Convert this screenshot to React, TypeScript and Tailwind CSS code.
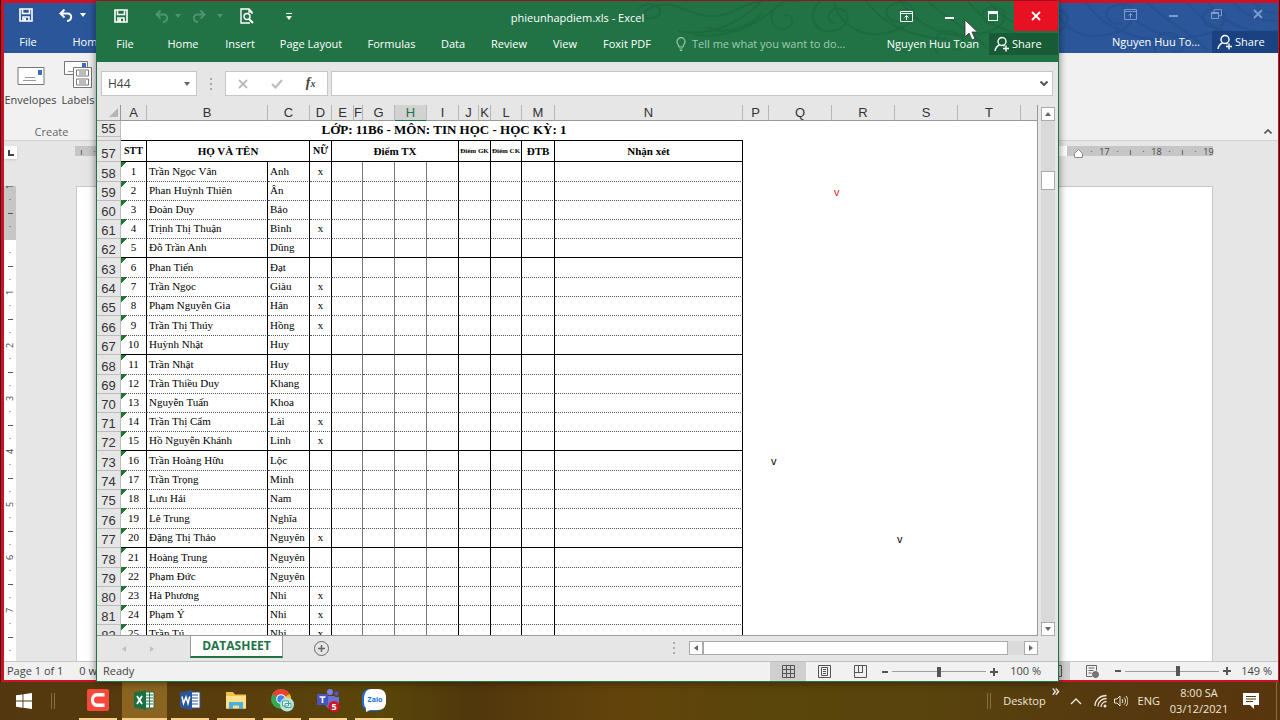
import clsx from "clsx";
import type { ReactNode } from "react";

// [first part of the name, given name, female mark]
const students: [string, string, boolean][] = [
    ["Trần Ngọc Vân", "Anh", true],
    ["Phan Huỳnh Thiên", "Ân", false],
    ["Đoàn Duy", "Bảo", false],
    ["Trịnh Thị Thuận", "Bình", true],
    ["Đỗ Trần Anh", "Dũng", false],
    ["Phan Tiến", "Đạt", false],
    ["Trần Ngọc", "Giàu", true],
    ["Phạm Nguyễn Gia", "Hân", true],
    ["Trần Thị Thúy", "Hồng", true],
    ["Huỳnh Nhật", "Huy", false],
    ["Trần Nhật", "Huy", false],
    ["Trần Thiều Duy", "Khang", false],
    ["Nguyễn Tuấn", "Khoa", false],
    ["Trần Thị Cẩm", "Lài", true],
    ["Hồ Nguyễn Khánh", "Linh", true],
    ["Trần Hoàng Hữu", "Lộc", false],
    ["Trần Trọng", "Minh", false],
    ["Lưu Hải", "Nam", false],
    ["Lê Trung", "Nghĩa", false],
    ["Đặng Thị Thảo", "Nguyên", true],
    ["Hoàng Trung", "Nguyên", false],
    ["Phạm Đức", "Nguyên", false],
    ["Hà Phương", "Nhi", true],
    ["Phạm Ý", "Nhi", true],
    ["Trần Tú", "Nhi", true],
];

const columns = [
    { name: "A", width: "w-[26px]" },
    { name: "B", width: "w-[121px]" },
    { name: "C", width: "w-[42px]" },
    { name: "D", width: "w-[22px]" },
    { name: "E", width: "w-[22px]" },
    { name: "F", width: "w-[9px]" },
    { name: "G", width: "w-[32px]" },
    { name: "H", width: "w-[32px]" },
    { name: "I", width: "w-[32px]" },
    { name: "J", width: "w-[20px]" },
    { name: "K", width: "w-[12px]" },
    { name: "L", width: "w-[31px]" },
    { name: "M", width: "w-[33px]" },
    { name: "N", width: "w-[188px]" },
    { name: "P", width: "w-[26px]" },
    { name: "Q", width: "w-[63px]" },
    { name: "R", width: "w-[63px]" },
    { name: "S", width: "w-[63px]" },
    { name: "T", width: "w-[63px]" },
];

const tabs = [
    { label: "File", width: "w-14" },
    { label: "Home", width: "w-[60px]" },
    { label: "Insert", width: "w-[54px]" },
    { label: "Page Layout", width: "w-[88px]" },
    { label: "Formulas", width: "w-[73px]" },
    { label: "Data", width: "w-[50px]" },
    { label: "Review", width: "w-[62px]" },
    { label: "View", width: "w-[50px]" },
    { label: "Foxit PDF", width: "w-[74px]" },
];

function Caret({ className }: { className?: string }) {
    return (
        <svg viewBox="0 0 6 4" className={clsx("h-[4px] w-[6px] shrink-0", className)} fill="currentColor">
            <path d="M0 0h6L3 4z" />
        </svg>
    );
}

function SaveIcon() {
    return (
        <svg viewBox="0 0 14 14" className="size-[14px]" fill="none" stroke="currentColor" strokeWidth="1.6">
            <path d="M1 1h12v12H1z" />
            <path d="M3.500 1v4.500h7V1M4 13V9h6v4" />
            <path d="M5 10h2v3H5z" fill="currentColor" stroke="none" />
        </svg>
    );
}

function UndoIcon({ flip }: { flip?: boolean }) {
    return (
        <svg viewBox="0 0 14 13" className={clsx("h-[13px] w-[14px]", flip && "-scale-x-100")} fill="none" stroke="currentColor" strokeWidth="2">
            <path d="M5.500 0.500 1.500 4.500l4 4M2 4.500h6.500c5 0 5 7-0.500 7.500" />
        </svg>
    );
}

function RibbonOptionsIcon() {
    return (
        <svg viewBox="0 0 13 11" className="h-[11px] w-[13px]" fill="none" stroke="currentColor">
            <path d="M.5.5h12v10H.5zM.5 2.500h12M6.500 9V4.500M4.500 6.500l2-2 2 2" />
        </svg>
    );
}

function CloseIcon() {
    return (
        <svg viewBox="0 0 10 10" className="size-[10px]" fill="none" stroke="currentColor" strokeWidth="1.8">
            <path d="m1 1 8 8M9 1 1 9" />
        </svg>
    );
}

function PersonPlusIcon() {
    return (
        <svg viewBox="0 0 16 16" className="size-4 shrink-0" fill="none" stroke="currentColor" strokeWidth="1.4">
            <circle cx="8" cy="5.500" r="4" />
            <path d="M1 15c.5-3 2-5 4.500-6M9 9.200l1.500 1M12 9.500v6M9 12.500h6" />
        </svg>
    );
}

// Calligraphic flourish behind the title bars
function Swirls({ className }: { className: string }) {
    return (
        <svg viewBox="0 0 420 54" preserveAspectRatio="xMaxYMin slice" className={clsx("pointer-events-none absolute", className)} fill="none" stroke="currentColor" strokeWidth="2">
            <path d="M0 8c14-12 30 2 18 8S-2 8 22 4s40 24 78 4c20-10 36-10 60-8" />
            <path d="M40 30c30 6 60-6 84-30M56 34c34 4 62-8 90-34M70 26c16 10 44-2 54-14" />
            <path d="M140 4c-12 10-6 26 6 24s10-16 0-14M182 0c-14 14-6 32 12 30s20-20 8-22-16 12-6 14" />
            <path d="M196 0c4 24 30 40 60 30s20-34 2-28-8 22 6 18M228 0c14 20 40 36 80 38" />
            <path d="M262 0c16 22 46 44 90 30 18-6 20-24 4-24s-14 18 0 18M290 0c14 16 40 26 60 48" />
            <path d="M330 0c14 20 34 34 90 40M350 0c20 24 40 30 70 28M376 0c10 12 24 18 44 18M396 0c4 6 12 10 24 10" />
            <path d="M300 54c-10-16 4-30 18-22s6 20-4 16M400 54c-4-14 6-20 20-20" />
        </svg>
    );
}

function RulerMark({ children, vertical }: { children?: ReactNode; vertical?: boolean }) {
    return (
        <span className={clsx("flex shrink-0 items-center justify-center text-[9px] leading-none text-[#444]", vertical ? "w-full flex-1" : "w-[13px]")}>
            {children}
        </span>
    );
}

function ZoomSlider({ value }: { value: number }) {
    return (
        <input
            type="range"
            aria-label="Zoom"
            defaultValue={value}
            className="h-3 w-[94px] appearance-none bg-transparent bg-[linear-gradient(#a0a0a0,#a0a0a0)] bg-[length:100%_1px] bg-center bg-no-repeat [&::-webkit-slider-thumb]:h-[10px] [&::-webkit-slider-thumb]:w-[4px] [&::-webkit-slider-thumb]:appearance-none [&::-webkit-slider-thumb]:bg-[#555]"
        />
    );
}

function WordWindow() {
    return (
        <section className="flex h-full flex-col border-t-[3px] border-r border-b-2 border-l-[3px] border-[#cf1126] bg-[#e6e6e6] text-[#444]">
            <header className="relative flex h-[50px] shrink-0 justify-between overflow-hidden bg-[#2b579a] text-white">
                <Swirls className="right-0 top-0 h-[54px] w-[420px] text-[#26508f]" />
                <div className="relative">
                    <div className="flex h-6 items-center">
                        <button aria-label="Save" className="flex w-11 justify-center"><SaveIcon /></button>
                        <button aria-label="Undo" className="flex w-9 justify-center"><UndoIcon /></button>
                        <Caret className="-ml-1" />
                    </div>
                    <nav className="flex h-[30px] items-center text-[11px]">
                        <button className="w-12">File</button>
                        <button className="w-[72px]">Home</button>
                    </nav>
                </div>
                <div className="relative">
                    <div className="flex h-[22px] items-center justify-end text-[#7d9bd0]">
                        <button aria-label="Ribbon display" className="flex w-[43px] justify-center"><RibbonOptionsIcon /></button>
                        <button aria-label="Minimize" className="flex w-[43px] justify-center"><span className="mt-1 h-[2px] w-[9px] bg-current" /></button>
                        <button aria-label="Restore" className="flex w-[43px] justify-center">
                            <svg viewBox="0 0 11 11" className="size-[11px]" fill="none" stroke="currentColor"><path d="M.5 3.500h7v6h-7zM.5 4.500h7M3 3.500V.7h7.500v6H8" /></svg>
                        </button>
                        <button aria-label="Close" className="flex w-10 justify-center"><CloseIcon /></button>
                    </div>
                    <div className="flex items-center justify-end gap-3 pt-[6px]">
                        <span className="text-[11px]">Nguyen Huu To...</span>
                        <button className="flex h-[22px] w-[66px] items-center gap-[2px] bg-[#1a4280] pl-[5px] text-[11px]"><PersonPlusIcon />Share</button>
                    </div>
                </div>
            </header>

            <div className="flex h-[88px] shrink-0 items-end justify-between border-b border-[#d2d2d2] bg-[#f1f1f1] text-[11px] leading-4">
                <div className="flex flex-col items-center">
                    <div className="flex">
                        <button className="flex w-[53px] flex-col items-center gap-1">
                            <svg viewBox="0 0 28 28" className="size-7" fill="none">
                                <path d="M1 7.500h26v17H1z" fill="#fff" stroke="#777" />
                                <path d="M21 10h4v5h-4z" fill="#3570c0" />
                                <path d="M8 17.500h10M6 20.500h13" stroke="#999" />
                            </svg>
                            Envelopes
                        </button>
                        <button className="flex w-[42px] flex-col items-center gap-1">
                            <svg viewBox="0 0 28 28" className="size-7" fill="none" stroke="#777">
                                <path d="M.5 1.500h23v13H.5z" fill="#fff" />
                                <path d="M18 3h4v5h-4z" fill="#3570c0" stroke="none" />
                                <path d="M4 11.500h5" stroke="#999" />
                                <path d="M9.500 7.500h18v20h-18z" fill="#fff" />
                                <path d="M12.500 10h12v6h-12zM12.500 19h12v6h-12zM15 12h7M15 14h7M15 21h7M15 23h7" />
                            </svg>
                            Labels
                        </button>
                    </div>
                    <span className="pt-4 text-[#666]">Create</span>
                </div>
                <button aria-label="Collapse ribbon" className="px-[6px] pb-[6px]">
                    <svg viewBox="0 0 8 5" className="h-[5px] w-2" fill="none" stroke="#555" strokeWidth="1.6"><path d="m.5 4.500 3.500-3.500 3.500 3.500" /></svg>
                </button>
            </div>

            <div className="flex h-[45px] shrink-0 items-start pt-[5px]">
                <span className="flex size-[13px] items-center justify-center bg-white shadow">
                    <span className="size-[6px] border-b-2 border-l-2 border-[#444]" />
                </span>
                <div className="ml-[58px] mr-[65px] flex h-[10px] flex-1 justify-between bg-white">
                    <div className="flex w-[60px] bg-[#c6c6c6]"><RulerMark>ı</RulerMark><RulerMark>·</RulerMark></div>
                    <div className="relative flex w-[146px] bg-[#c6c6c6] pl-[18px]">
                        {["·", "17", "·", "ı", "·", "18", "·", "ı", "·", "19"].map((mark, i) => (
                            <RulerMark key={i}>{mark}</RulerMark>
                        ))}
                        <svg viewBox="0 0 9 9" className="absolute left-[7px] top-[3px] size-[9px]" fill="#fff" stroke="#888"><path d="M.5 8.500V4.500l4-4 4 4v4z" /></svg>
                    </div>
                </div>
            </div>

            <div className="flex min-h-0 flex-1">
                <div className="w-3 shrink-0 overflow-hidden bg-[linear-gradient(#c6c6c6_54px,#fff_54px)]">
                    <div className="-mt-[6px]">
                        {["1", "", "1", "2", "3", "4", "5", "6", "7", "8"].map((num, i) => (
                            <div key={i} className="flex h-[53px] flex-col">
                                <RulerMark vertical><span className="-rotate-90">{num}</span></RulerMark>
                                <RulerMark vertical>·</RulerMark>
                                <RulerMark vertical><span className="h-px w-[5px] bg-[#555]" /></RulerMark>
                                <RulerMark vertical>·</RulerMark>
                            </div>
                        ))}
                    </div>
                </div>
                <div className="ml-[60px] mr-[65px] flex-1 border border-b-0 border-[#c8c8c8] bg-white" />
            </div>

            <footer className="flex h-[19px] shrink-0 items-center justify-between border-t border-[#c6c6c6] bg-[#f1f1f1] text-[11px]">
                <div className="flex gap-4 pl-[3px]">
                    <span>Page 1 of 1</span>
                    <span>0 w</span>
                </div>
                <div className="flex items-center gap-1 pr-[6px]">
                    <span className="flex h-[18px] w-7 items-center justify-center bg-[#cfcfcf]">
                        <svg viewBox="0 0 12 12" className="size-3" fill="none" stroke="#555"><path d="M.5.5h11v11H.5zM3 3.500h6M3 5.500h6M3 7.500h6" /></svg>
                    </span>
                    <svg viewBox="0 0 13 13" className="mx-3 size-[13px]" fill="none" stroke="#666">
                        <path d="M6 11.500H.5V.5h10v5M2.500 3h6M2.500 5.500h5M2.500 8h3" />
                        <circle cx="9.500" cy="9.500" r="3" fill="#777" />
                    </svg>
                    <button aria-label="Zoom out" className="h-[2px] w-[6px] bg-[#555]" />
                    <ZoomSlider value={57} />
                    <svg viewBox="0 0 8 8" className="size-2" stroke="#555" strokeWidth="2"><path d="M4 0v8M0 4h8" /></svg>
                    <span className="pl-[6px]">149 %</span>
                </div>
            </footer>
        </section>
    );
}

function ExcelTitleBar() {
    return (
        <header className="relative h-[61px] shrink-0 overflow-hidden bg-[#217346] text-[11px] text-white">
            <Swirls className="right-0 top-0 h-[54px] w-[420px] text-[#1d6a40]" />
            <div className="relative grid h-[30px] grid-cols-[1fr_auto_1fr] items-center">
                <div className="flex items-center">
                    <button aria-label="Save" className="flex w-12 justify-center"><SaveIcon /></button>
                    <button aria-label="Undo" className="flex w-[34px] justify-center text-[#4f9470]"><UndoIcon /></button>
                    <Caret className="-ml-1 text-[#4f9470]" />
                    <button aria-label="Redo" className="flex w-9 justify-center text-[#4f9470]"><UndoIcon flip /></button>
                    <Caret className="text-[#4f9470]" />
                    <button aria-label="Print preview" className="flex w-12 justify-center">
                        <svg viewBox="0 0 14 16" className="h-4 w-[14px]" fill="none" stroke="currentColor" strokeWidth="1.400">
                            <path d="M12 6V4L9 1H1v14h9M9 1v3h3" />
                            <circle cx="7" cy="8.500" r="3" />
                            <path d="m9 11 4 4" strokeWidth="2" />
                        </svg>
                    </button>
                    <button aria-label="Customize toolbar" className="flex w-9 flex-col items-center gap-[2px]">
                        <span className="h-px w-[6px] bg-white" />
                        <Caret />
                    </button>
                </div>
                <h1 className="pt-1">phieunhapdiem.xls - Excel</h1>
                <div className="flex h-full items-center justify-end">
                    <button aria-label="Ribbon display" className="flex w-[43px] justify-center"><RibbonOptionsIcon /></button>
                    <button aria-label="Minimize" className="flex w-[43px] justify-center"><span className="mt-1 h-[2px] w-[9px] bg-current" /></button>
                    <button aria-label="Maximize" className="flex w-[43px] justify-center"><span className="h-[10px] w-[10px] border border-t-[3px] border-current" /></button>
                    <button aria-label="Close" className="flex h-full w-11 items-center justify-center bg-[#e81123]"><CloseIcon /></button>
                </div>
            </div>
            <div className="relative flex h-[26px] items-center justify-between">
                <nav className="flex">
                    {tabs.map((tab) => (
                        <button key={tab.label} className={clsx("whitespace-nowrap", tab.width)}>{tab.label}</button>
                    ))}
                    <button className="flex items-center gap-[6px] pl-3 text-[#a0cbb2]">
                        <svg viewBox="0 0 10 14" className="h-[14px] w-[10px]" fill="none" stroke="currentColor" strokeWidth="1.200">
                            <path d="M3 10C3 8 1 7 1 4.700a4 4 0 0 1 8 0C9 7 7 8 7 10zM3.500 12h3M4 13.500h2" />
                        </svg>
                        Tell me what you want to do...
                    </button>
                </nav>
                <div className="flex items-center gap-[10px]">
                    <span>Nguyen Huu Toan</span>
                    <button className="flex h-[22px] w-[69px] items-center gap-[2px] bg-[#185c37] pl-[5px]"><PersonPlusIcon />Share</button>
                </div>
            </div>
        </header>
    );
}

function FormulaBar() {
    return (
        <div className="flex h-[43px] shrink-0 items-center bg-[#e6e6e6] pl-1 pr-[5px] text-xs text-[#444]">
            <div className="flex h-[25px] w-[96px] items-center border border-[#c6c6c6] bg-white px-[6px]">
                <input aria-label="Name box" defaultValue="H44" className="w-full min-w-0 outline-none" />
                <Caret className="text-[#666]" />
            </div>
            <span className="flex w-7 flex-col items-center gap-[3px]">
                <i className="size-[2px] bg-[#aaa]" /><i className="size-[2px] bg-[#aaa]" /><i className="size-[2px] bg-[#aaa]" />
            </span>
            <div className="mr-[3px] flex h-[25px] w-[103px] items-center justify-around border border-[#c6c6c6] bg-white">
                <button aria-label="Cancel" className="text-[#bbb]"><CloseIcon /></button>
                <button aria-label="Enter">
                    <svg viewBox="0 0 12 10" className="h-[10px] w-3" fill="none" stroke="#bbb" strokeWidth="2"><path d="m1 5 3.500 3.500L11 1" /></svg>
                </button>
                <button className="font-['Liberation_Serif',serif] text-sm font-bold italic leading-4">f<span className="text-[10px]">x</span></button>
            </div>
            <div className="flex h-[25px] flex-1 items-center border border-[#c6c6c6] bg-white pr-1">
                <input aria-label="Formula" className="min-w-0 flex-1 outline-none" />
                <svg viewBox="0 0 8 5" className="h-[5px] w-2" fill="none" stroke="#555" strokeWidth="2"><path d="m.5.5 3.500 3.500 3.500-3.500" /></svg>
            </div>
        </div>
    );
}

function RowHead({ children }: { children: ReactNode }) {
    return (
        <th scope="row" className="border-r border-b border-[#bdbdbd] bg-[#e6e6e6] p-0 align-bottom font-['Liberation_Sans',sans-serif] text-[13px] font-normal leading-[15px] text-[#333]">
            {children}
        </th>
    );
}

function Sheet() {
    const head = "whitespace-nowrap border-r border-b border-black p-0 font-bold leading-4";
    return (
        <table className="w-full table-fixed border-separate border-spacing-0 font-['Liberation_Serif',serif] text-[11px] leading-4 text-black">
            <colgroup>
                <col className="w-[24px]" />
                {columns.map((col) => <col key={col.name} className={col.width} />)}
                <col />
            </colgroup>
            <thead>
                <tr className="h-4 bg-[#e6e6e6] font-['Liberation_Sans',sans-serif] text-[13px] text-[#333]">
                    <th className="border-b border-r border-[#999] p-0">
                        <svg viewBox="0 0 9 9" className="ml-auto mr-[2px] size-[9px]" fill="#b5b5b5"><path d="M9 0v9H0z" /></svg>
                    </th>
                    {columns.map((col) => (
                        <th
                            key={col.name}
                            scope="col"
                            className={clsx(
                                "border-b border-r p-0 font-normal leading-[15px]",
                                col.name === "H" ? "border-[#217346] border-r-[#bbb] bg-[#d2d2d2] text-[#217346]" : "border-b-[#999] border-r-[#b5b5b5]"
                            )}
                        >
                            <span className="flex justify-center">{col.name}</span>
                        </th>
                    ))}
                    <th className="border-b border-[#999] p-0" />
                </tr>
            </thead>
            <tbody>
                <tr className="h-4">
                    <RowHead>55</RowHead>
                    <td colSpan={14} className="p-0 pl-6 text-center text-[13px] font-bold leading-[15px]">LỚP: 11B6 - MÔN: TIN HỌC - HỌC KỲ: 1</td>
                    <td colSpan={6} className="p-0" />
                </tr>
                <tr className="h-1">
                    <th className="border-b border-r border-[#bdbdbd] bg-[#e6e6e6] p-0" />
                    <td colSpan={14} className="border-b border-black p-0" />
                    <td colSpan={6} className="p-0" />
                </tr>
                <tr className="h-[21px]">
                    <RowHead>57</RowHead>
                    <th className={clsx(head, "text-[10px]")}>STT</th>
                    <th colSpan={2} className={clsx(head, "text-[11px]")}>HỌ VÀ TÊN</th>
                    <th className={clsx(head, "text-[10px]")}>NỮ</th>
                    <th colSpan={5} className={clsx(head, "text-[11px]")}>Điểm TX</th>
                    <th colSpan={2} className={clsx(head, "text-[7px]")}>Điểm GK</th>
                    <th className={clsx(head, "text-[7px]")}>Điểm CK</th>
                    <th className={clsx(head, "text-[11px]")}>ĐTB</th>
                    <th className={clsx(head, "text-[11px]")}>Nhận xét</th>
                    <td colSpan={6} className="p-0" />
                </tr>
                {students.map(([name, given, female], i) => {
                    const row = i + 58;
                    const line = i % 5 === 4 ? "border-b border-b-black" : "border-b border-b-[#555] [border-bottom-style:dotted]";
                    const cell = clsx("border-r border-r-black p-0 pb-[2px]", line);
                    const soft = clsx("border-r border-r-[#777] p-0", line);
                    const free = "p-0 pl-[2px] font-['Liberation_Sans',sans-serif]";
                    return (
                        <tr key={row} className={i % 5 === 0 || i % 10 === 8 ? "h-5" : "h-[19px]"}>
                            <RowHead>{row}</RowHead>
                            <td className={clsx(cell, "bg-[linear-gradient(135deg,#1a7a2e_4px,transparent_4px)] text-center")}>{i + 1}</td>
                            <td className={clsx(cell, "whitespace-nowrap pl-[2px]")}>{name}</td>
                            <td className={clsx(cell, "whitespace-nowrap pl-[2px]")}>{given}</td>
                            <td className={clsx(cell, "text-center")}>{female && "x"}</td>
                            <td colSpan={2} className={soft} />
                            <td className={soft} />
                            <td className={soft} />
                            <td className={cell} />
                            <td colSpan={2} className={cell} />
                            <td className={cell} />
                            <td className={cell} />
                            <td className={cell} />
                            <td className="p-0" />
                            <td className={free}>{row === 73 && "v"}</td>
                            <td className={clsx(free, "text-[#e02020]")}>{row === 59 && "v"}</td>
                            <td className={free}>{row === 77 && "v"}</td>
                            <td colSpan={2} className="p-0" />
                        </tr>
                    );
                })}
            </tbody>
        </table>
    );
}

function ScrollButton({ label, className }: { label: string; className: string }) {
    return (
        <button aria-label={label} className="flex size-[14px] shrink-0 items-center justify-center border border-[#ababab] bg-white text-[#666]">
            <Caret className={className} />
        </button>
    );
}

function ExcelWindow() {
    return (
        <section className="absolute top-px right-[221px] bottom-0 left-24 flex flex-col border-x border-b border-[#217346] bg-[#e6e6e6] shadow-[0_0_8px_rgba(0,0,0,0.5)]">
            <ExcelTitleBar />
            <FormulaBar />

            <div className="flex min-h-0 flex-1">
                <div className="min-w-0 flex-1 overflow-hidden border-r border-b border-[#999] bg-white">
                    <Sheet />
                </div>
                <div className="flex w-5 shrink-0 flex-col items-center pt-[2px]">
                    <ScrollButton label="Scroll up" className="rotate-180" />
                    <div className="w-[14px] flex-1 bg-[#d9d9d9] pt-[50px]">
                        <div className="h-[19px] border border-[#ababab] bg-white" />
                    </div>
                    <ScrollButton label="Scroll down" className="" />
                </div>
            </div>

            <div className="flex h-[25px] shrink-0 items-start justify-between text-xs">
                <div className="flex h-full items-center">
                    <span className="flex w-[93px] gap-[22px] pl-[24px] text-[#c0c0c0]">
                        <Caret className="rotate-90" />
                        <Caret className="-rotate-90" />
                    </span>
                    <button className="h-[22px] w-[93px] self-start border-x border-b-2 border-[#999] border-b-[#217346] bg-white font-bold text-[#217346]">DATASHEET</button>
                    <button aria-label="New sheet" className="ml-[31px]">
                        <svg viewBox="0 0 15 15" className="size-[15px]" fill="none" stroke="#666"><circle cx="7.500" cy="7.500" r="7" /><path d="M7.500 4v7M4 7.500h7" strokeWidth="1.500" /></svg>
                    </button>
                </div>
                <div className="flex items-center pr-5 pt-[5px]">
                    <span className="mr-[14px] flex flex-col gap-[3px]">
                        <i className="size-[2px] bg-[#aaa]" /><i className="size-[2px] bg-[#aaa]" /><i className="size-[2px] bg-[#aaa]" />
                    </span>
                    <ScrollButton label="Scroll left" className="rotate-90" />
                    <div className="flex w-[321px] bg-[#dadada]">
                        <div className="h-[14px] w-[305px] border border-[#ababab] bg-white" />
                    </div>
                    <ScrollButton label="Scroll right" className="-rotate-90" />
                </div>
            </div>

            <footer className="flex h-5 shrink-0 items-center justify-between border-t border-[#c0c0c0] bg-[#f1f1f1] text-[11px] text-[#444]">
                <span className="pl-[6px]">Ready</span>
                <div className="flex items-center pr-[17px]">
                    <button aria-label="Normal view" className="flex h-[19px] w-9 items-center justify-center bg-[#cfcfcf]">
                        <svg viewBox="0 0 13 13" className="size-[13px]" fill="none" stroke="#555"><path d="M.5.5h12v12H.5zM4.500 0v13M8.500 0v13M0 4.500h13M0 8.500h13" /></svg>
                    </button>
                    <button aria-label="Page layout view" className="flex w-9 justify-center">
                        <svg viewBox="0 0 13 13" className="size-[13px]" fill="none" stroke="#555"><path d="M.5.5h12v12H.5zM3.500 2.500h6v8h-6zM5 4.500h3M5 6.500h3M5 8.500h3" /></svg>
                    </button>
                    <button aria-label="Page break view" className="flex w-9 justify-center">
                        <svg viewBox="0 0 13 13" className="size-[13px]" fill="none" stroke="#555"><path d="M.5.5h12v12H.5zM4.500 0v7.500M8.500 0v7.500M0 7.500h9" /></svg>
                    </button>
                    <button aria-label="Zoom out" className="mx-1 h-[2px] w-[6px] bg-[#555]" />
                    <ZoomSlider value={50} />
                    <svg viewBox="0 0 8 8" className="mx-1 size-2" stroke="#555" strokeWidth="2"><path d="M4 0v8M0 4h8" /></svg>
                    <span className="ml-2">100 %</span>
                </div>
            </footer>
        </section>
    );
}

function TaskbarApp({ label, active, children }: { label: string; active?: boolean; children: ReactNode }) {
    return (
        <button aria-label={label} className="flex h-full w-[46px] flex-col items-center">
            <span className={clsx("flex w-[45px] flex-1 items-center justify-center", active && "bg-[#8a6420]")}>
                <svg viewBox="0 0 24 24" className="size-6">{children}</svg>
            </span>
            <span className={clsx("h-[2px] bg-[#f9d08b]", active ? "w-[45px]" : "w-[38px]")} />
        </button>
    );
}

function Taskbar() {
    return (
        <footer className="flex h-[38px] shrink-0 items-center justify-between bg-[linear-gradient(90deg,#53370f,#5a3f0c_20%,#594609_30%,#50370c_37%,#63430b_48%,#59460a_60%,#59440c_72%,#553a0f_85%,#59350d)] text-[11px] text-[#efe6d5]">
            <div className="flex h-full items-center">
                <button aria-label="Start" className="flex w-[47px] justify-center">
                    <svg viewBox="0 0 16 16" className="size-4" fill="#fff"><path d="M0 2.300 6.500 1.400v6.100H0zM7.400 1.300 16 0v7.500H7.400zM0 8.500h6.500v6.200L0 13.800zM7.400 8.500H16V16l-8.600-1.200z" /></svg>
                </button>
                <span className="ml-1 mr-5 h-4 w-1 border-x border-[#8a7040]" />
                <TaskbarApp label="Camtasia">
                    <rect x="1" y="1" width="22" height="22" rx="2" fill="#f5493c" />
                    <path d="M18.500 5H11c-8 0-8 14 0 14h7.500v-3.500H11c-4 0-4-7 0-7h7.500z" fill="#fff" />
                </TaskbarApp>
                <TaskbarApp label="Excel" active>
                    <path d="M13 4h9v16h-9z" fill="#fff" stroke="#217346" />
                    <path d="M14 7h7M14 10h7M14 13h7M14 16h7M17.500 4v16" stroke="#217346" />
                    <path d="M2 4.500 14 2v20L2 19.500z" fill="#1d7044" />
                    <path d="m5 8 5 8M10 8l-5 8" stroke="#fff" strokeWidth="1.800" />
                </TaskbarApp>
                <TaskbarApp label="Word">
                    <path d="M13 4h9v16h-9z" fill="#fff" stroke="#2b579a" />
                    <path d="M14 7h6M14 10h6M14 13h6M14 16h6" stroke="#2b579a" />
                    <path d="M2 4.500 14 2v20L2 19.500z" fill="#2b579a" />
                    <path d="m4 8.500 1.500 7L8 9l2 6.500 1.700-7" fill="none" stroke="#fff" strokeWidth="1.500" />
                </TaskbarApp>
                <TaskbarApp label="File Explorer">
                    <path d="M2 4h7l2 2.500h11v14H2z" fill="#f3c14b" />
                    <path d="M2 8h20v12.500H2z" fill="#fde08c" />
                    <path d="M5 21v-7h14v7h-4v-3.500H9V21z" fill="#4aaee0" />
                </TaskbarApp>
                <TaskbarApp label="Chrome">
                    <circle cx="11" cy="11" r="10" fill="#34a853" />
                    <path d="M11 11 2.300 6a10 10 0 0 1 17.400 0z" fill="#ea4335" />
                    <path d="m11 11 8.700-5A10 10 0 0 1 11 21z" fill="#fbbc05" />
                    <circle cx="11" cy="11" r="4.800" fill="#fff" />
                    <circle cx="11" cy="11" r="3.800" fill="#4285f4" />
                    <circle cx="17" cy="16.500" r="7" fill="#b8e4de" />
                    <path d="M12.500 13h6v5h-6zM15 15.500h6v4h-6z" fill="#e8f8f5" stroke="#4ba397" />
                </TaskbarApp>
                <TaskbarApp label="Teams">
                    <circle cx="14" cy="4" r="3" fill="#7b83eb" />
                    <circle cx="20.500" cy="5.500" r="2.200" fill="#5059c9" />
                    <path d="M10 8h9v13h-6l-3-3zM19 9h4v7l-4 2z" fill="#6a70d0" />
                    <path d="M1 6h11v11H1z" fill="#4b53bc" />
                    <path d="M3.500 9h6M6.500 9v6" stroke="#fff" strokeWidth="1.600" />
                    <circle cx="18" cy="18.500" r="5.500" fill="#d0142c" />
                    <text x="18" y="22" textAnchor="middle" fontSize="9" fontWeight="700" fill="#fff">5</text>
                </TaskbarApp>
                <TaskbarApp label="Zalo">
                    <rect x="0" y="1" width="22" height="22" rx="8" fill="#1e6fe0" />
                    <path d="M9 1h7c5 0 8 3 8 8v5c0 5-3 8-8 8H8l-4 2v-4c-2-2-2-4-2-7s0-12 7-12z" fill="#fff" />
                    <text x="13" y="14" textAnchor="middle" fontSize="7" fontWeight="700" fill="#1e6fe0">Zalo</text>
                </TaskbarApp>
            </div>

            <div className="flex h-full items-center">
                <span className="mr-3 h-4 w-1 border-x border-[#8a7040]" />
                <span>Desktop</span>
                <span className="ml-[6px] self-start text-base leading-4 text-white">»</span>
                <svg viewBox="0 0 12 7" className="ml-[10px] h-[7px] w-3" fill="none" stroke="currentColor" strokeWidth="1.400"><path d="m1 6 5-5 5 5" /></svg>
                <svg viewBox="0 0 14 14" className="ml-3 size-[14px]" fill="none" stroke="currentColor" strokeWidth="1.300">
                    <path d="M1 12C1 6 6 1.500 12.500 1.500M4 12.500C4 8 8 4.500 12.500 4.500M7 13c0-3 2.500-5.500 5.500-5.500" />
                    <circle cx="11" cy="12" r="1.500" fill="currentColor" stroke="none" />
                </svg>
                <svg viewBox="0 0 14 12" className="ml-[6px] h-3 w-[14px]" fill="none" stroke="currentColor">
                    <path d="M.5 4h2.500l3-3v10L3 8H.5zM8 4c1 1 1 3 0 4M10 2.500c2 2 2 5 0 7M12 1c2.500 3 2.500 7 0 10" />
                </svg>
                <span className="ml-[10px]">ENG</span>
                <div className="ml-[10px] flex w-[58px] flex-col items-center whitespace-nowrap leading-4">
                    <span>8:00 SA</span>
                    <span>03/12/2021</span>
                </div>
                <svg viewBox="0 0 16 16" className="ml-[15px] size-4" fill="#fff">
                    <path d="M0 0h16v12h-5v4l-4-4H0z" />
                    <path d="M3 3.500h10M3 6h10M3 8.500h7" stroke="#553a0f" />
                </svg>
                <span className="ml-[17px] mr-[3px] h-full w-px bg-[#8a7040]" />
            </div>
        </footer>
    );
}

export default function App() {
    return (
        <main className="flex h-screen flex-col overflow-hidden font-['Open_Sans','Noto_Sans',sans-serif]">
            <div className="relative min-h-0 flex-1 bg-[#3a0a10] px-px">
                <WordWindow />
                <ExcelWindow />
                {/* mouse pointer */}
                <svg viewBox="0 0 14 22" className="absolute top-[19px] left-[964px] h-[22px] w-[14px]" fill="#fff" stroke="#333" strokeWidth="0.800">
                    <path d="M1 1v17l4-4 3 7 3-1.500L8 13h5.500z" />
                </svg>
            </div>
            <Taskbar />
        </main>
    );
}
